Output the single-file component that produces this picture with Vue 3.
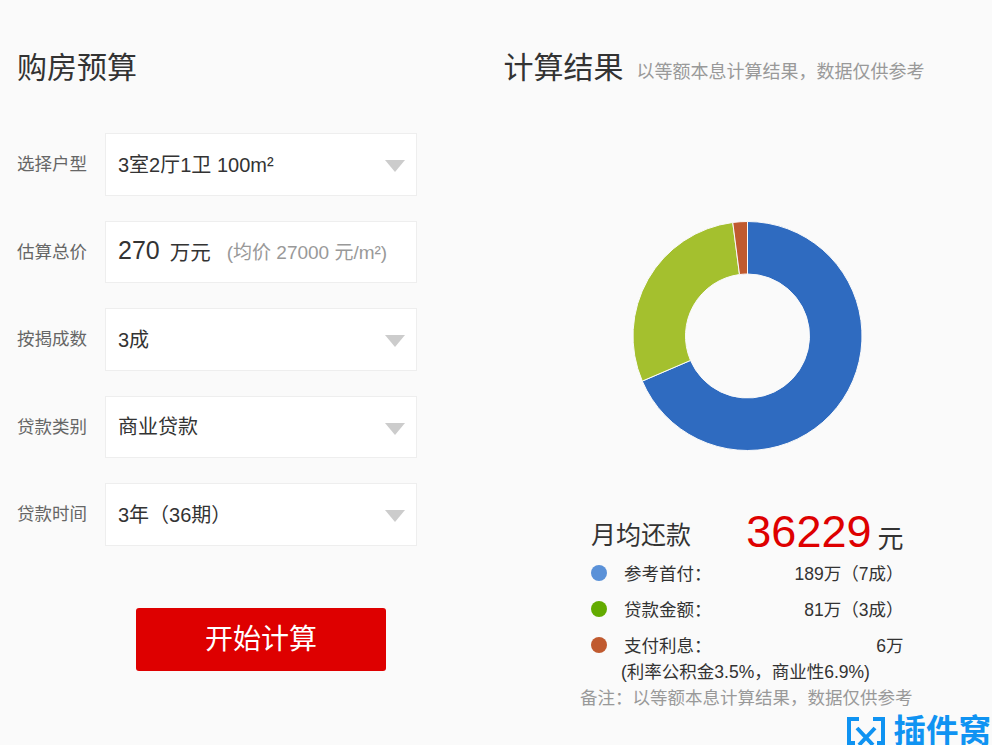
<script setup>
const fields = [
  { label: '选择户型', value: '3室2厅1卫 100m²' },
  { label: '估算总价', price: true },
  { label: '按揭成数', value: '3成' },
  { label: '贷款类别', value: '商业贷款' },
  { label: '贷款时间', value: '3年（36期）' },
]

const legend = [
  { label: '参考首付：', value: '189万（7成）', color: '#5a91d8' },
  { label: '贷款金额：', value: '81万（3成）', color: '#63ab00' },
  { label: '支付利息：', value: '6万', color: '#c05a2f' },
]

// donut slices as clockwise angles from the top
const cx = 114.5
const cy = 115
const outer = 114.5
const inner = 62

function point(r, deg) {
  const a = (deg - 90) * Math.PI / 180
  return `${(cx + r * Math.cos(a)).toFixed(2)} ${(cy + r * Math.sin(a)).toFixed(2)}`
}

function slice(from, to) {
  const large = to - from > 180 ? 1 : 0
  return `M${point(outer, from)} A${outer} ${outer} 0 ${large} 1 ${point(outer, to)} L${point(inner, to)} A${inner} ${inner} 0 ${large} 0 ${point(inner, from)} Z`
}

const slices = [
  { d: slice(0, 246.8), color: '#2f6bc0' },
  { d: slice(246.8, 352.6), color: '#a4c02e' },
  { d: slice(352.6, 360), color: '#c05a2f' },
]
</script>

<template>
  <div class="page">
    <section class="form-col">
      <h2 class="title">购房预算</h2>
      <div class="fields">
        <div v-for="f in fields" :key="f.label" class="field">
          <label>{{ f.label }}</label>
          <div class="box">
            <template v-if="f.price">
              <span class="price">270</span>
              <span class="unit">万元</span>
              <span class="avg">(均价 27000 元/m²)</span>
            </template>
            <template v-else>
              <span>{{ f.value }}</span>
              <i class="arrow"></i>
            </template>
          </div>
        </div>
      </div>
      <button class="calc-btn">开始计算</button>
    </section>

    <section class="result-col">
      <div class="result-head">
        <h2 class="title">计算结果</h2>
        <span class="hint">以等额本息计算结果，数据仅供参考</span>
      </div>
      <svg class="donut" width="230" height="230" viewBox="0 0 230 230">
        <path v-for="s in slices" :key="s.color" :d="s.d" :fill="s.color" stroke="#fafafa" stroke-width="1" />
      </svg>
      <div class="summary">
        <div class="monthly">
          <span class="monthly-label">月均还款</span>
          <span class="monthly-num">36229</span>
          <span class="monthly-unit">元</span>
        </div>
        <div v-for="l in legend" :key="l.label" class="legend-row">
          <i class="dot" :style="{ background: l.color }"></i>
          <span class="legend-label">{{ l.label }}</span>
          <span class="legend-value">{{ l.value }}</span>
        </div>
        <div class="rate">(利率公积金3.5%，商业性6.9%)</div>
      </div>
      <div class="note">备注：以等额本息计算结果，数据仅供参考</div>
    </section>

    <div class="watermark">
      <svg width="38" height="28" viewBox="0 0 38 28">
        <path d="M12 2H2V26H8M26 2H36V26H30" fill="none" stroke="#0f93f2" stroke-width="4" />
        <path d="M10 11L26 28M28 11L12 28" fill="none" stroke="#0f93f2" stroke-width="4" />
      </svg>
      <span class="watermark-text">插件窝</span>
    </div>
  </div>
</template>

<style scoped>
.page {
  position: relative;
  display: flex;
  height: 745px;
  overflow: hidden;
  background: #fafafa;
  color: #333;
  font-family: "Liberation Sans", "Noto Sans CJK SC", sans-serif;
}

.form-col {
  width: 503.5px;
  box-sizing: border-box;
  padding: 47px 0 0 17px;
}

.title {
  margin: 0;
  font-size: 30px;
  font-weight: 400;
  line-height: 42px;
  color: #333;
}

.fields {
  display: flex;
  flex-direction: column;
  gap: 25px;
  margin-top: 44px;
}

.field {
  display: flex;
  align-items: center;
  height: 62.5px;
}

.field label {
  width: 88px;
  margin-top: -3px;
  font-size: 17.5px;
  color: #666;
}

.box {
  display: flex;
  align-items: center;
  position: relative;
  width: 312px;
  height: 100%;
  box-sizing: border-box;
  padding: 0 0 2px 12px;
  background: #fff;
  border: 1px solid #eee;
  font-size: 20px;
}

.price {
  font-size: 25px;
  margin-right: 10px;
}

.unit {
  font-size: 20.5px;
  margin-right: 16px;
}

.avg {
  font-size: 19px;
  color: #999;
}

.arrow {
  position: absolute;
  right: 11px;
  top: 26px;
  width: 0;
  height: 0;
  border-left: 10px solid transparent;
  border-right: 10px solid transparent;
  border-top: 12px solid #ccc;
}

.calc-btn {
  display: block;
  width: 250px;
  height: 63px;
  margin: 62px 0 0 119px;
  padding: 0 0 4px;
  border: 0;
  border-radius: 3px;
  background: #de0000;
  color: #fff;
  font-family: inherit;
  font-size: 28px;
}

.result-col {
  flex: 1;
  padding-top: 47px;
  position: relative;
}

.result-head {
  display: flex;
  align-items: baseline;
  gap: 13px;
}

.hint {
  font-size: 18px;
  color: #999;
}

.donut {
  display: block;
  margin: 132px 0 0 129px;
}

.summary {
  width: 312.5px;
  margin: 50px 0 0 87.5px;
  font-size: 17.5px;
}

.monthly {
  display: flex;
  align-items: flex-end;
  height: 53px;
  margin-bottom: 1px;
}

.monthly-label {
  width: 157px;
  margin-bottom: 4.5px;
  font-size: 25px;
  line-height: 30px;
}

.monthly-num {
  margin-bottom: -1px;
  font-size: 45px;
  line-height: 47px;
  color: #de0000;
}

.monthly-unit {
  margin: 0 0 0 6px;
  font-size: 26px;
  line-height: 30px;
}

.legend-row {
  display: flex;
  align-items: center;
  height: 36px;
}

.legend-label,
.legend-value {
  margin-top: -1px;
}

.dot {
  width: 16px;
  height: 16px;
  border-radius: 50%;
  margin-right: 17px;
}

.legend-value {
  margin-left: auto;
}

.rate {
  margin: -4px 0 0 30px;
  line-height: 27px;
}

.note {
  margin: -1px 0 0 76.5px;
  font-size: 17.5px;
  line-height: 26px;
  color: #999;
}

.watermark {
  position: absolute;
  right: 0;
  bottom: 0;
  display: flex;
  align-items: center;
  gap: 8px;
  height: 32px;
  padding-right: 1px;
  color: #0f93f2;
  font-size: 32.5px;
  font-weight: 700;
  white-space: nowrap;
}

.watermark svg {
  align-self: flex-end;
}

.watermark-text {
  margin-bottom: 2px;
}
</style>

<style>
html, body {
  margin: 0;
  background: #fafafa;
}
</style>
